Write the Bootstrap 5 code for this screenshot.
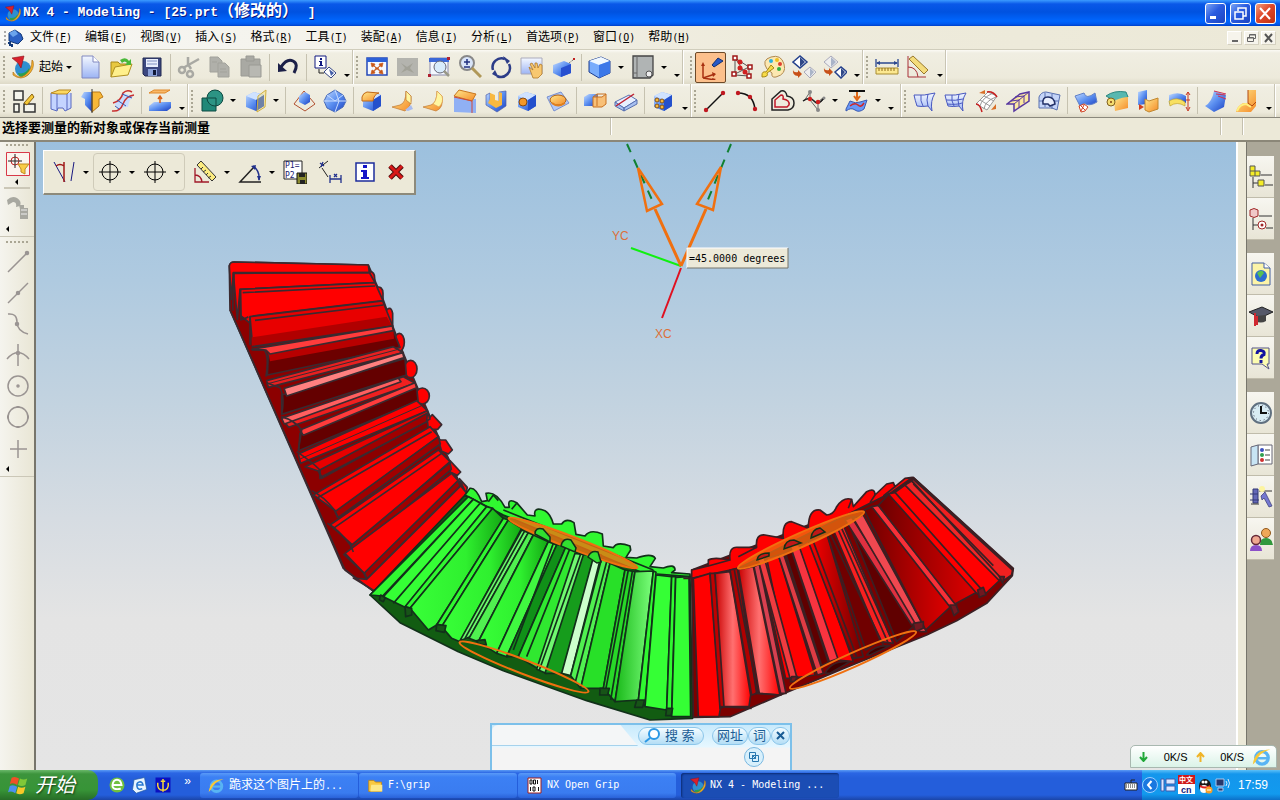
<!DOCTYPE html>
<html lang="zh-CN">
<head>
<meta charset="utf-8">
<meta name="viewport" content="width=device-width, initial-scale=1">
<title>NX 4 - Modeling</title>
<link href="https://cdn.jsdelivr.net/npm/bootstrap@5.3.0/dist/css/bootstrap.min.css" rel="stylesheet">
<style>
:root{--face:#ece9d8;--mono:"DejaVu Sans Mono","Noto Sans CJK SC",monospace}
body{font:12px/16px "Liberation Sans","Noto Sans CJK SC",sans-serif;color:#000;background:var(--face);overflow:hidden}
button{border:0;background:none;padding:0;color:inherit;font:inherit;white-space:nowrap}
svg{display:block;flex:none}
.lat{font-family:var(--mono);font-size:10px}
/* title bar */
.titlebar{height:26px;background:linear-gradient(#3c9bff 0,#0a58e8 4px,#0052e0 12px,#0066fe 21px,#0059ee 24px,#0040c8);color:#fff;font:bold 13px/26px "Liberation Mono","Noto Sans CJK SC",monospace;text-shadow:1px 1px #0a1883}
.titlebar .caption{white-space:pre;padding-left:2px}
.titlebar .han{font-size:16px;line-height:20px}
.win{width:21px;height:21px;border:1px solid #fff;border-radius:3px;background:linear-gradient(135deg,#7aa4f5,#2a5ce0 45%,#1c44c0)}
.win.shut{background:linear-gradient(135deg,#f0a080,#e0482a 45%,#c03010)}
/* menu bar */
.menubar{height:24px;background:linear-gradient(90deg,#f8f8f6,#eeebdc 60%,#ece9d8);border-bottom:1px solid #d0cdbc}
.menubar a{color:#000;text-decoration:none;white-space:nowrap}
.menus{gap:13px;margin-left:6px}
.mdi{width:15px;height:14px;background:#f6f4ec;border:1px solid #fff;border-right-color:#d5d1c0;border-bottom-color:#d5d1c0}
/* tool rows */
.tools{height:34px;background:linear-gradient(#fbfaf5 0,#f0eee2 3px,#edeadb 28px,#dedac8)}
.tools.last{border-bottom:1px solid #8b887c}
.grp{box-shadow:inset -1px 0 #c9c5b4,1px 0 #fff}
.grip{width:8px;display:flex;align-items:center;justify-content:center}
.grip::before{content:"";width:2px;height:22px;background:repeating-linear-gradient(#aaa694 0 2px,transparent 2px 4px)}
.tb{width:31px;height:33px;display:flex;align-items:center;justify-content:center;flex:none}
.tb svg,.side svg,.tab svg{width:24px;height:24px}
.tb.hot{height:31px;margin-top:2px;background:#fcc08c;border:1px solid #6c4a2a;border-radius:2px}
.bar{width:6px;display:flex;align-items:center;justify-content:center}
.bar::before{content:"";width:1px;height:27px;background:#c6c2b0}
.dd{width:12px;display:flex;align-items:center;justify-content:center;flex:none}
.dd::before,.ov::before{content:"";border:3px solid transparent;border-top-color:#000;border-bottom:0}
.ov{width:13px;display:flex;align-items:flex-end;justify-content:center;padding-bottom:7px}
.start-menu{width:66px;padding-left:2px}
.start-menu svg{margin-right:5px}
.cue{height:24px;font-weight:bold;font-size:13px;line-height:19px;padding-left:2px;border-bottom:2px solid #8b8778}
.cue .cell{flex:1 1 0}
.cue .seg{width:2px;height:17px;background:linear-gradient(90deg,#c4c0ae 50%,#fff 50%)}
/* work area */
.side{width:36px;background:linear-gradient(90deg,#f5f4ee,#e9e6d5);border-right:2px solid #77756b}
.side .tb{width:35px;height:31px}
.side .dots{height:6px;width:22px;margin-left:6px;background:repeating-linear-gradient(90deg,#aaa694 0 2px,transparent 2px 4px) 0 2px/22px 2px no-repeat}
.side .edge + .dots{height:9px;background-position:0 4px}
.side .lft{height:12px;padding:3px 0 0 6px}
.side .lft::before,.lft2::before{content:"";display:block;width:0;border:3px solid transparent;border-right-color:#000;border-left:0}
.lft2{height:8px;padding:0 0 0 15px}
.side .rule{height:2px;margin:0 4px 3px;background:#cbc7b7}
.side .edge{height:2px;border-bottom:1px solid #cbc7b7}
.canvas{background:linear-gradient(#9cc0de 0,#afcae0 22%,#c3d3e0 42%,#d6dce2 60%,#e4e4e4 76%,#e5e5e5)}
.float{left:7px;top:8px;height:45px;background:#ece9d8;border:1px solid #fff;border-right:2px solid #8d8a7b;border-bottom:2px solid #8d8a7b;padding:0 3px 0 4px}
.pair{border:1px solid #cfcbb9;border-radius:4px;height:38px}
.float .dd{width:14px}
.right-edge{width:11px;background:#ece9d8;border-left:2px solid #fff;border-right:1px solid #77756b}
.res{width:33px;background:#aca899;padding-top:14px;gap:13px}
.tab{width:27px;height:42px;display:flex;align-items:center;justify-content:center;background:linear-gradient(#f7f6f0,#e8e5d6);border-bottom:1px solid #c0bcab}
/* search box */
.finder{left:454px;bottom:0;width:302px;height:47px;border:2px solid #7cc0ea;border-bottom:0;background:linear-gradient(#c8eafc,#e6f7ff 22px,#f4f4f4 23px);color:#1a5c94}
.finder input{width:146px;height:21px;border:0;border-radius:6px 0 0 0;background:#f4f6f7;outline:0;border-bottom:1px solid #a6d2ec;clip-path:polygon(0 0,88% 0,100% 100%,0 100%)}
.pill{height:18px;border:1px solid #8cc6ea;border-radius:9px;background:linear-gradient(#f4fcff,#b4def6);font-size:13px;line-height:16px}
.go{width:69px;padding-left:4px}
.round{width:20px;height:20px;border:1px solid #7ab8e0;border-radius:50%;background:#d8f0fc;right:26px;top:22px}
.speed{right:3px;bottom:32px;width:147px;height:23px;border:1px solid #a8b8b0;border-radius:5px 5px 0 0;background:linear-gradient(#fff,#dbf3e8);font-size:11px}
/* task bar */
.taskbar{height:30px;background:linear-gradient(#5a9bf5 0,#2b66e4 3px,#245edb 8px,#245edb 25px,#1b45a8);color:#fff}
.startbtn{width:98px;height:30px;border-radius:0 10px 10px 0;background:linear-gradient(#6ab86a 0,#3c943c 4px,#379437 20px,#276c27);font-size:20px;line-height:26px;font-style:italic;text-shadow:1px 1px 2px #143c14;gap:5px;padding-left:8px}
.quick{width:102px;gap:5px;padding:0 9px 0 10px}
.task{width:158px;height:25px;border-radius:3px;background:linear-gradient(#5a9af8,#3c80f4 4px,#3a7cf0 20px,#2a62d8);gap:4px;padding-left:8px;min-width:0}
.task.on{background:#1b4db4;box-shadow:inset 1px 1px 2px #0c2c74}
.tray{height:30px;gap:2px;background:linear-gradient(#5cc0f8 0,#1496ec 4px,#129aee 24px,#0c70c8);padding-right:12px}
</style>
</head>
<body class="vh-100 d-flex flex-column">
<!-- shared paint -->
<svg width="0" height="0" class="position-absolute" aria-hidden="true">
<defs>
<linearGradient id="b" x2="1" y2="1"><stop stop-color="#c4dcff"/><stop offset=".5" stop-color="#5b8ff0"/><stop offset="1" stop-color="#1b3fc0"/></linearGradient>
<linearGradient id="o" x2="1" y2="1"><stop stop-color="#ffe98c"/><stop offset="1" stop-color="#f58a28"/></linearGradient>
<linearGradient id="lb" x2="0" y2="1"><stop stop-color="#f4f8ff"/><stop offset="1" stop-color="#9cb4f4"/></linearGradient>
<linearGradient id="pk" x2="1"><stop stop-color="#c80000"/><stop offset=".5" stop-color="#ff7070"/><stop offset="1" stop-color="#f00"/></linearGradient>
<linearGradient id="dk" x2="1"><stop stop-color="#f00"/><stop offset="1" stop-color="#700000"/></linearGradient>
<linearGradient id="kd" x2="1"><stop stop-color="#6c0000"/><stop offset="1" stop-color="#e00000"/></linearGradient>
<linearGradient id="gn" x2="1"><stop stop-color="#38ff38"/><stop offset=".6" stop-color="#2ff02f"/><stop offset="1" stop-color="#14a814"/></linearGradient>
<linearGradient id="gl" x2="1"><stop stop-color="#18b818"/><stop offset="1" stop-color="#7cff7c"/></linearGradient>
<symbol id="nx" viewBox="0 0 24 24"><circle cx="13" cy="14" r="8" fill="#2f8fd0"/><path d="M8 18q7 2 11-5l1 4q-4 7-11 4z" fill="#2aa050"/><path d="M3 17q5 8 12 3t7-15l1 1q2 8-5 14T3 20z" fill="#f4b02c" stroke="#a86a10" stroke-width=".6"/><path d="m2 3 12-2-3 12-3-5z" fill="#d8202c" stroke="#8c1018" stroke-width=".6"/></symbol>
<symbol id="cube" viewBox="0 0 24 24"><path d="M3 7 11 3l10 3v11l-8 5-10-4z" fill="url(#b)"/><path d="m3 7 8-4 10 3-8 5z" fill="#cfe2ff"/><path d="M13 11v11l8-5V6z" fill="#2450cc"/></symbol>
<symbol id="tgt" viewBox="0 0 24 24"><g fill="none" stroke="#000"><circle cx="12" cy="12" r="8"/><path d="M12 1v22M1 12h22"/></g></symbol>
<symbol id="ie" viewBox="0 0 24 24"><circle cx="12" cy="13" r="7.500" fill="none" stroke="#58b4f4" stroke-width="4"/><path d="M6 12h14v3H6z" fill="#58b4f4"/><path d="M1 21Q3 3 22 3 9 6 4 18z" fill="#f8c838"/></symbol>
</defs>
</svg>

<header class="titlebar d-flex align-items-center px-1">
<svg width="17" height="17"><use href="#nx"/></svg>
<span class="caption">NX 4 - Modeling - [25.prt<span class="han">（修改的） </span>]</span>
<div class="ms-auto d-flex gap-1">
<button class="win" aria-label="Minimize"><svg width="19" height="19"><path d="M4 12h6v3H4z" fill="#fff"/></svg></button>
<button class="win" aria-label="Restore"><svg width="19" height="19" fill="none" stroke="#fff" stroke-width="1.500"><path d="M4 8h8v7H4zM7 7V4h8v8h-3"/></svg></button>
<button class="win shut" aria-label="Close"><svg width="19" height="19" stroke="#fff" stroke-width="2"><path d="m4 4 10 11M14 4 4 15"/></svg></button>
</div>
</header>

<nav class="menubar d-flex align-items-center px-1">
<svg width="20" height="20" viewBox="0 0 20 20"><path d="M1 3v14" stroke="#aaa" stroke-width="2" stroke-dasharray="2 2"/><path d="m5 5 6-3 6 4 2 5-5 5-9-3z" fill="#2c62c4" stroke="#123878"/><path d="m5 5 6-3 3 4-5 3z" fill="#6aa4ec"/><path d="M4 15h2v2h2v2" stroke="#123878" fill="none" stroke-width="2"/></svg>
<div class="menus d-flex">
<a href="#">文件<span class="lat">(<u>F</u>)</span></a><a href="#">编辑<span class="lat">(<u>E</u>)</span></a><a href="#">视图<span class="lat">(<u>V</u>)</span></a><a href="#">插入<span class="lat">(<u>S</u>)</span></a><a href="#">格式<span class="lat">(<u>R</u>)</span></a><a href="#">工具<span class="lat">(<u>T</u>)</span></a><a href="#">装配<span class="lat">(<u>A</u>)</span></a><a href="#">信息<span class="lat">(<u>I</u>)</span></a><a href="#">分析<span class="lat">(<u>L</u>)</span></a><a href="#">首选项<span class="lat">(<u>P</u>)</span></a><a href="#">窗口<span class="lat">(<u>O</u>)</span></a><a href="#">帮助<span class="lat">(<u>H</u>)</span></a>
</div>
<div class="ms-auto d-flex" style="gap:2px">
<button class="mdi" aria-label="Minimize document"><svg width="13" height="12"><path d="M4 8h6v2H4z" fill="#666"/></svg></button>
<button class="mdi" aria-label="Restore document"><svg width="13" height="12" fill="none" stroke="#666"><path d="M2.500 5.500h6v4h-6zM4.500 5V2.500h6v4H9M2.500 6h6M5 3h6"/></svg></button>
<button class="mdi" aria-label="Close document"><svg width="13" height="12" stroke="#555" stroke-width="2"><path d="m3 2 7 8M10 2l-7 8"/></svg></button>
</div>
</nav>

<div class="tools d-flex" role="toolbar">
<div class="grp d-flex"><i class="grip"></i>
<button class="start-menu d-flex align-items-center"><svg width="24" height="24"><use href="#nx"/></svg>起始<i class="dd"></i></button>
<button class="tb" aria-label="New"><svg viewBox="0 0 24 24"><path d="M4 1h11l6 6v16H4z" fill="url(#lb)" stroke="#8088c0"/><path d="M15 1v6h6" fill="#fff" stroke="#8088c0"/></svg></button>
<button class="tb" aria-label="Open"><svg viewBox="0 0 24 24"><path d="M2 22V7h7l2 2h9v4" fill="#e8c840" stroke="#a88818"/><path d="m2 22 4-10 17-3-4 11z" fill="#fff08c" stroke="#b09020"/><path d="M11 5q6-4 9 1l2-2v6h-6l2-2q-2-3-5 0z" fill="#48b838"/></svg></button>
<button class="tb" aria-label="Save"><svg viewBox="0 0 24 24"><path d="M3 3h18v18H5l-2-2z" fill="#3c4880" stroke="#202850"/><path d="M6 4h12v8H6z" fill="#e8eefc"/><path d="M7 6h10M7 9h10" stroke="#8090c0"/><path d="M8 14h9v7H8z" fill="#8aa0d8"/><path d="M13 15h3v5h-3z" fill="#101838"/></svg></button>
<i class="bar"></i>
<button class="tb" aria-label="Cut"><svg viewBox="0 0 24 24" fill="none" stroke="#a9a9a3" stroke-width="2.500"><path d="M11 2v7l3 5M22 4 6 13"/><circle cx="5" cy="15" r="3"/><circle cx="13" cy="19" r="3"/></svg></button>
<button class="tb" aria-label="Copy"><svg viewBox="0 0 24 24" fill="#b0b0aa" stroke="#a2a29b"><path d="M2 2h8l4 4v11H2z"/><path d="M10 8h7l4 4v10H10z"/><path d="M12 14h6M12 17h7M4 7h5"/></svg></button>
<button class="tb" aria-label="Paste"><svg viewBox="0 0 24 24" fill="#a9a9a3" stroke="#9a9a94"><path d="M2 4h19v17H2z"/><path d="M7 1h8v5H7z"/><path d="M10 10h12v12H10z" fill="#b8b8b2"/></svg></button>
<i class="bar"></i>
<button class="tb" aria-label="Undo"><svg viewBox="0 0 24 24"><path d="M5 12Q11 3 17 6t1 12" fill="none" stroke="#1c2048" stroke-width="3"/><path d="M2 8v9l9-1z" fill="#1c2048"/></svg></button>
<i class="bar"></i>
<button class="tb" aria-label="Information"><svg viewBox="0 0 24 24"><path d="M2 1h11v12H2z" fill="#fff" stroke="#101880"/><path d="M7 3h2v2H7zM6 6h3v4h1v1H6v-1h1V7H6z" fill="#101880"/><path d="M6 14v4h5" fill="none" stroke="#222"/><path d="m11 17 5-5 7 6-5 5z" fill="#fff" stroke="#344484"/><path d="m16 14 5 4-3 3z" fill="#4660a8"/></svg></button>
<i class="ov"></i></div>

<div class="grp d-flex me-1"><i class="grip"></i>
<button class="tb" aria-label="Fit"><svg viewBox="0 0 24 24"><path d="M2 3h20v17H2z" fill="#f4f8ff" stroke="#2448b8" stroke-width="1.500"/><path d="M2 3h20v4H2z" fill="#2c60d8"/><path d="m6 8 4 1-1 2 3 2 3-2-1-2 4-1-1 4-2-1-2 2 2 3 2-1 1 4-4-1 1-2-3-2-3 2 1 2-4 1 1-4 2 1 2-3-2-2-2 1z" fill="#c85818" stroke="#c85818" stroke-width=".7"/></svg></button>
<button class="tb" aria-label="Fit selection"><svg viewBox="0 0 24 24"><path d="M1 3h21v18H1z" fill="#b4b4ae"/><path d="m5 8 6 4 6-4-3 5 4 5-7-3-6 3 4-5z" fill="#a2a298"/></svg></button>
<button class="tb" aria-label="Zoom window"><svg viewBox="0 0 24 24"><path d="M3 3h18v17H3z" fill="#f4f8ff" stroke="#88a"/><path d="M2 3h20v4H2z" fill="#3c68d8"/><circle cx="13" cy="12" r="6" fill="#d8ecfc" stroke="#667"/><path d="m17 16 5 5" stroke="#998" stroke-width="2.500"/><path d="M1 19h3v3H1zM20 2h3v3h-3z" fill="#b02030"/></svg></button>
<button class="tb" aria-label="Zoom"><svg viewBox="0 0 24 24"><circle cx="9" cy="8" r="7" fill="#d8e4f8" stroke="#888" stroke-width="2"/><path d="M6 7h6M9 4v6M6 12h6" stroke="#203080" stroke-width="1.500"/><path d="m14 13 9 9" stroke="#b09858" stroke-width="3"/></svg></button>
<button class="tb" aria-label="Rotate"><svg viewBox="0 0 24 24" fill="none" stroke="#2c3c88" stroke-width="2.500"><path d="M4 15A9 9 0 0 1 16 4M20 9A9 9 0 0 1 8 21"/><path d="m14 1 7 5-3 3zM10 23l-7-4 3-4z" fill="#2c3c88" stroke="none"/></svg></button>
<button class="tb" aria-label="Pan"><svg viewBox="0 0 24 24"><path d="M1 3h21v16H1z" fill="url(#lb)" stroke="#aab"/><path d="m9 12 4 3-3-6 2-1 3 5 0-5 2 0 1 5 2-4 2 1v9l-4 4h-5z" fill="#f8c870" stroke="#b07828" stroke-width=".8"/></svg></button>
<button class="tb" aria-label="Perspective"><svg viewBox="0 0 24 24"><path d="M2 10 13 6l7 3v9l-10 4-8-4z" fill="url(#b)"/><path d="m10 13 10-4v9l-10 4z" fill="#2850d0"/><path d="M22 4h2" stroke="#c02020" stroke-width="2"/><path d="m18 8 4-3" stroke="#555" stroke-dasharray="1 1"/></svg></button>
<i class="bar"></i>
<button class="tb" aria-label="Shaded"><svg viewBox="0 0 24 24"><path d="m1 6 12-4 9 4v12l-11 5-10-6z" fill="#78acfc" stroke="#1c3c90"/><path d="m1 6 12-4 9 4-11 4z" fill="#f0f8ff"/><path d="M11 10v13l11-5V6z" fill="#3c78e8"/></svg></button><i class="dd"></i>
<button class="tb" aria-label="Layer"><svg viewBox="0 0 24 24"><path d="M2 1h20v19l-3 3H2z" fill="#b0b4b4" stroke="#444" stroke-width="1.300"/><path d="M6 1v17H2M6 18v5" stroke="#666" fill="none"/><circle cx="18" cy="19" r="3" fill="#eee" stroke="#555"/></svg></button><i class="dd"></i>
<i class="ov"></i></div>

<div class="grp d-flex"><i class="grip"></i>
<button class="tb hot" aria-label="WCS"><svg viewBox="0 0 24 24"><path d="M4 22V8m0 14 12-4M4 22l12 2" stroke="#a83010" stroke-width="1.500"/><path d="M2 10l2-4 2 4zM13 16l4 2-3 3zM13 22l4 1-3 2z" fill="#a83010"/><path d="m13 9 6-7 5 3-9 6z" fill="#2858c8" stroke="#14306c"/></svg></button>
<button class="tb" aria-label="Reorient"><svg viewBox="0 0 24 24"><path d="M5 3v17l14 1V12L5 3l8 12M5 19l14-7" fill="none" stroke="#555"/><path d="M3 1h4v4H3zM2 17h4v4H2zM17 19h4v4h-4zM18 10h4v4h-4z" fill="#fff" stroke="#a01818" stroke-width="1.500"/><circle cx="10" cy="7" r="2.500" fill="#d02020"/><circle cx="10" cy="13" r="2.500" fill="#d02020"/><circle cx="15" cy="17" r="2.500" fill="#d02020"/></svg></button>
<button class="tb" aria-label="Display"><svg viewBox="0 0 24 24"><path d="M6 14Q0 5 10 2t13 7-8 13q-5 1-4-4z" fill="#fce8b0" stroke="#b08850"/><circle cx="10" cy="6" r="2" fill="#2cb0e0"/><circle cx="16" cy="5" r="2" fill="#f0c020"/><circle cx="19" cy="9" r="2" fill="#e04030"/><circle cx="18" cy="14" r="2" fill="#30b040"/><path d="M1 20q0-4 4-3l5-7 3 3-7 5q2 4-5 4z" fill="#f8dc48" stroke="#a88818"/></svg></button>
<button class="tb" aria-label="Show"><svg viewBox="0 0 24 24"><path d="m1 7 7-6 7 6-7 6z" fill="#fff" stroke="#24408c" stroke-width="1.500"/><path d="m8 2 5 5-5 5z" fill="#304888"/><path d="m12 17 6-5 6 5-6 6z" fill="#eee" stroke="#aab"/><path d="m18 13 4 4-4 5z" fill="#aab4c8"/><path d="M1 14q0 4 5 3v-2l4 4-4 4v-2q-6 0-5-7z" fill="#c85018"/></svg></button>
<button class="tb" aria-label="Hide"><svg viewBox="0 0 24 24"><path d="m1 7 7-6 7 6-7 6z" fill="#eee" stroke="#aab"/><path d="m8 2 5 5-5 5z" fill="#aab4c8"/><path d="m12 17 6-5 6 5-6 6z" fill="#fff" stroke="#24408c" stroke-width="1.500"/><path d="m18 13 4 4-4 5z" fill="#304888"/><path d="M1 12q0 4 5 3v-2l4 4-4 4v-2q-6 0-5-7z" fill="#c85018"/></svg></button>
<i class="ov"></i></div>

<div class="grp d-flex"><i class="grip"></i>
<button class="tb" aria-label="Distance"><svg viewBox="0 0 24 24"><path d="M1 4v8M23 4v8M2 8h20" stroke="#2c4890" stroke-width="1.300"/><path d="m1 8 4-2v4zM23 8l-4-2v4z" fill="#2c4890"/><path d="M1 13h22v6H1z" fill="#fce890" stroke="#a88c30"/><path d="M4 13v3M7 13v3M10 13v3M13 13v3M16 13v3M19 13v3" stroke="#906c18"/></svg></button>
<button class="tb" aria-label="Angle"><svg viewBox="0 0 24 24"><path d="M2 1v21h18M2 12q9 0 10 10" fill="none" stroke="#a83038"/><path d="m3 4 4-3 15 14-4 4z" fill="#f4dc7c" stroke="#98782c"/></svg></button>
<i class="ov"></i></div>
</div>

<div class="tools last d-flex" role="toolbar">
<div class="grp d-flex"><i class="grip"></i>
<button class="tb" aria-label="Sketch"><svg viewBox="0 0 24 24"><path d="M2 2h9v9H2zM2 15h5v8H2zM12 15h11v8H12z" fill="#f4f4ec" stroke="#333" stroke-width="1.500"/><path d="m12 14 8-9 2 3-7 8z" fill="#f4c838" stroke="#8c6410"/></svg></button><i class="bar"></i>
<button class="tb" aria-label="Extrude"><svg viewBox="0 0 24 24"><path d="M2 4v16l6 2 1-3h5l2 3 6-3V4" fill="#c4d4ff" stroke="#5868c0"/><path d="m2 4 8-3h12l-4 4H8z" fill="#fcd860" stroke="#b88820"/><path d="M8 5v16M18 5v16" stroke="#5868c0"/></svg></button>
<button class="tb" aria-label="Revolve"><svg viewBox="0 0 24 24"><path d="M12 3H4L1 8l4 2v6l7 7z" fill="url(#b)"/><path d="M12 3h8l3 5-4 2v7l-7 6z" fill="#f8b838" stroke="#b87818"/><path d="M12 0v24" stroke="#333"/></svg></button>
<button class="tb" aria-label="Sweep"><svg viewBox="0 0 24 24"><path d="M3 13q8-1 9-9l10 3q-4 4-5 11-6-1-9 5z" fill="#c8dcff"/><path d="M1 22q8 1 11-7t11-9M2 14Q10 12 12 4q4-4 9-1" fill="none" stroke="#c83030" stroke-width="1.500"/><path d="m6 11 9 6M11 5l10 4M4 17l4 3" stroke="#3858b0" fill="none"/></svg></button><i class="bar"></i>
<button class="tb" aria-label="Thicken"><svg viewBox="0 0 24 24"><path d="m1 4 5-3h16l-5 3z" fill="#f8b868" stroke="#e08828"/><path d="m1 17 5-4h17v6l-4 3H1z" fill="url(#b)"/><path d="M12 14V7m-2 3 2-3 2 3" stroke="#d86018" stroke-width="1.500" fill="none"/></svg></button><i class="ov"></i></div>
<div class="grp d-flex"><i class="grip"></i>
<button class="tb" aria-label="Unite"><svg viewBox="0 0 24 24"><path d="M2 9h14v13H2z" fill="#208878" stroke="#0c4840"/><circle cx="15" cy="9" r="8" fill="#2c9484" stroke="#0c4840"/><path d="M8 9h8v8" stroke="#0c4840" fill="none"/></svg></button><i class="dd"></i>
<button class="tb" aria-label="Trim"><svg viewBox="0 0 24 24"><use href="#cube"/><path d="m14 23 8-5L23 1l-8 6z" fill="#fce060" fill-opacity=".35" stroke="#d0b040"/></svg></button><i class="dd"></i><i class="bar"></i>
<button class="tb" aria-label="Draft"><svg viewBox="0 0 24 24"><path d="M12 2 2 15l11 7 10-7z" fill="none" stroke="#b05030"/><path d="m7 7 6-4 5 3v7l-5 3-6-3z" fill="url(#b)"/></svg></button>
<button class="tb" aria-label="Body"><svg viewBox="0 0 24 24"><path d="m12 1 8 5 3 6-3 6-8 5-8-4-3-7 3-6z" fill="url(#b)" stroke="#4468b8"/><path d="M1 12h15l7 0M12 1l4 11-4 11M4 6l8 6 8-6" stroke="#c8dcff" fill="none"/></svg></button><i class="bar"></i>
<button class="tb" aria-label="Edge blend"><svg viewBox="0 0 24 24"><use href="#cube"/><path d="M2 12V8q1-4 5-5l12 1q-5 1-6 8z" fill="url(#o)" stroke="#c06818"/></svg></button>
<button class="tb" aria-label="Face blend"><svg viewBox="0 0 24 24"><path d="m1 18 8-2q6-2 6-14l5 5q1 10-6 15z" fill="url(#o)" stroke="#c07830" stroke-width=".7"/><path d="M15 2v9l5 4V7z" fill="#fff6a0" stroke="#c07830" stroke-width=".7"/><path d="m14 21 6-5 2 4-5 2z" fill="#a8bcf0"/></svg></button>
<button class="tb" aria-label="Soft blend"><svg viewBox="0 0 24 24"><path d="m1 18 8-2q6-2 6-14l5 5q2 12-6 15z" fill="url(#o)" stroke="#c07830" stroke-width=".7"/><path d="M15 2q0 9-4 13l6 3q5-5 3-11z" fill="#fff6a0" stroke="#e0a050" stroke-width=".7"/></svg></button>
<button class="tb" aria-label="Chamfer"><svg viewBox="0 0 24 24"><path d="M1 8v15l22 1V10z" fill="#90b0f4"/><path d="m1 7 5-6 17 4-4 7z" fill="url(#o)" stroke="#c87820"/><path d="m1 8 18 4v12" fill="none" stroke="#d04838"/></svg></button>
<button class="tb" aria-label="Shell"><svg viewBox="0 0 24 24"><path d="M2 6 6 4v10l6 3 3-2V3l7-1v15l-9 6-11-7z" fill="url(#b)" stroke="#5060a8" stroke-width=".7"/><path d="M6 10V4l5 2v5l4 1V3l3 1v12l-6 3-8-5z" fill="#f8b840"/></svg></button>
<button class="tb" aria-label="Hole"><svg viewBox="0 0 24 24"><use href="#cube"/><circle cx="8" cy="13" r="4" fill="#f49828" stroke="#884810"/></svg></button>
<button class="tb" aria-label="Boss"><svg viewBox="0 0 24 24"><path d="m1 8 14-5 8 11-15 8z" fill="#b0c8f8" stroke="#7890d0"/><ellipse cx="12" cy="11" rx="8" ry="5" fill="url(#o)" stroke="#b06010"/><path d="M6 14q6 5 13 0" fill="none" stroke="#e08020" stroke-width="2"/></svg></button><i class="bar"></i>
<button class="tb" aria-label="Offset face"><svg viewBox="0 0 24 24"><path d="m1 8 5-3h9v12H1z" fill="url(#b)"/><path d="M10 8h9l4-3v10l-4 3h-9z" fill="#f8c078" stroke="#c87020"/><path d="m10 8 4-3h9M14 5v12" stroke="#c87020" fill="none"/></svg></button>
<button class="tb" aria-label="Scale"><svg viewBox="0 0 24 24" stroke="#5870b0"><path d="m1 13 14-7 8 5-13 8z" fill="#e8f0ff"/><path d="m1 13 9 6v3l-9-5zM10 19l13-8v4l-13 7z" fill="#a8c0f0"/><path d="m2 17 18-12" stroke="#c02030" stroke-width="1.500"/></svg></button><i class="bar"></i>
<button class="tb" aria-label="Pattern"><svg viewBox="0 0 24 24"><use href="#cube"/><g fill="#f8b838" stroke="#80501c"><circle cx="6" cy="11" r="2"/><circle cx="11" cy="12" r="2"/><circle cx="6" cy="17" r="2"/><circle cx="11" cy="18" r="2"/></g></svg></button><i class="ov"></i></div>
<div class="grp d-flex pe-1"><i class="grip"></i>
<button class="tb" aria-label="Line"><svg viewBox="0 0 24 24"><path d="M3 21 20 4" stroke="#111" stroke-width="1.500"/><circle cx="3" cy="21" r="2.200" fill="#c01820"/><circle cx="20" cy="4" r="2.200" fill="#c01820"/></svg></button>
<button class="tb" aria-label="Arc"><svg viewBox="0 0 24 24"><path d="M4 4q15 0 17 16" fill="none" stroke="#111" stroke-width="1.500"/><circle cx="4" cy="4" r="2.200" fill="#c01820"/><circle cx="16" cy="8" r="2.200" fill="#c01820"/><circle cx="21" cy="20" r="2.200" fill="#c01820"/></svg></button><i class="bar"></i>
<button class="tb" aria-label="Offset curve"><svg viewBox="0 0 24 24" fill="none"><path d="M1 21V10l9-8q5-1 6 5 7 1 7 7t-6 7z" stroke="#222" stroke-width="1.500"/><path d="M4 18v-7l6-5q3 0 2 4 7 1 6 6l-2 2z" stroke="#c01828" stroke-width="1.500"/></svg></button>
<button class="tb" aria-label="Spline"><svg viewBox="0 0 24 24"><path d="M1 12q7-5 11 0t10-2M2 12l6-9 0 8 8 10 0-8 6-5" stroke="#666" fill="none"/><circle cx="8" cy="3" r="2" fill="#888"/><circle cx="16" cy="21" r="2" fill="#888"/><circle cx="22" cy="9" r="1.500" fill="#888"/><path d="M1 12q7-5 11 0t9-2" stroke="#222" fill="none" stroke-width="1.500"/><circle cx="8" cy="10" r="2.200" fill="#d02020"/><circle cx="16" cy="13" r="2.200" fill="#d02020"/></svg></button><i class="dd"></i>
<button class="tb" aria-label="Project curve"><svg viewBox="0 0 24 24"><path d="M4 2h16" stroke="#111" stroke-width="2"/><path d="m1 20 4-8q6 3 10 1l7-2-3 9q-5 4-9 1t-9 1z" fill="#6898f8" stroke="#3858b0"/><path d="M5 17q5-4 8-1t6-2" stroke="#d02828" fill="none" stroke-width="1.500"/><path d="M12 3v6m-3-2 3 4 3-4" stroke="#e06818" stroke-width="2" fill="none"/></svg></button><i class="dd"></i><i class="ov"></i></div>
<div class="grp d-flex"><i class="grip"></i>
<button class="tb" aria-label="Ruled"><svg viewBox="0 0 24 24" stroke="#4858c0"><path d="M1 6q10 1 21-2-5 8-3 18l-4-5q-6 1-11 0-2-6-3-11z" fill="url(#lb)"/><path d="M8 6q-1 6 2 11M15 5q-2 6 0 12" fill="none"/></svg></button>
<button class="tb" aria-label="Mesh"><svg viewBox="0 0 24 24" stroke="#4858c0"><path d="M1 6q10 1 21-2-5 8-3 18l-4-5q-6 1-11 0-2-6-3-11z" fill="url(#lb)"/><path d="M8 6q-1 6 2 11M15 5q-2 6 0 12M2 11q10 1 17-1M3 15q10 1 15-1" fill="none"/></svg></button>
<button class="tb" aria-label="Swept"><svg viewBox="0 0 24 24"><path d="m1 15 12-12 9 4-10 14z" fill="#fff" stroke="#999"/><path d="m5 11 10 6M9 7l10 5M5 17q2-8 13-13M9 20q1-8 12-12" stroke="#999" fill="none"/><path d="M1 15q4 0 6 8M12 3q6-1 10 5" stroke="#c82020" fill="none" stroke-width="1.500"/><path d="m4 4 6-3v4zM16 21l5-6v5z" fill="#d87028"/></svg></button>
<button class="tb" aria-label="Section"><svg viewBox="0 0 24 24"><path d="m1 15 13-10 9-2v9l-15 10v-7z" fill="#fce8a0" stroke="#5838a0" stroke-width="1.500"/><path d="m8 15 15-12M5 12l8-1v7M9 8l9-1v7" stroke="#5838a0" fill="none"/></svg></button>
<button class="tb" aria-label="N-sided"><svg viewBox="0 0 24 24" stroke="#5870b0"><path d="M2 8q2-5 7-5l14 3-3 15-5-2H2z" fill="#c4d4f8"/><path d="M2 12h20M8 4v14M15 5v15" fill="none"/><path d="M6 15q-1-7 5-7t7 7l-5 2-2-2z" fill="#e8eefc" stroke="#223068" stroke-width="1.500"/></svg></button><i class="bar"></i>
<button class="tb" aria-label="Bridge"><svg viewBox="0 0 24 24"><path d="m1 7 9-3q2 7 11 0l2 9q-8 5-13 1l-4 3z" fill="url(#b)" stroke="#6080c8"/><path d="m5 17 5-2 4 3-3 4-4 1z" fill="#fff" stroke="#d04020"/><path d="m7 17 4 4m-1-5-3 6" stroke="#d04020"/></svg></button>
<button class="tb" aria-label="Extension"><svg viewBox="0 0 24 24"><path d="M1 7q8-6 20-4l2 5-13 4z" fill="#58b8b0" stroke="#2c8880"/><path d="M9 12q8-4 14-4v11l-13 3z" fill="url(#o)"/><circle cx="6" cy="13" r="4" fill="#f4dc70" stroke="#806020"/><circle cx="6" cy="13" r="1" fill="#804010"/></svg></button>
<button class="tb" aria-label="Offset surface"><svg viewBox="0 0 24 24"><path d="m2 3 9-2v14l-9 1z" fill="url(#b)"/><path d="m9 10 4 2 9-3v11l-9 3-4-2z" fill="url(#o)" stroke="#c08830"/><path d="m3 15 5 3-5 3z" fill="#d04020"/></svg></button>
<button class="tb" aria-label="Thick sheet"><svg viewBox="0 0 24 24"><path d="M2 6q10-4 17 1v7q-8-4-17 1z" fill="url(#b)"/><path d="M2 12q8-5 16 1v4q-8-5-15 0z" fill="#f8e060" stroke="#b89828" stroke-width=".6"/><path d="M21 3v17m-2-9h4m-4-5 2-3 2 3m-4 12 2 4 2-4" stroke="#c83820" fill="none"/></svg></button><i class="bar"></i>
<button class="tb" aria-label="Sew"><svg viewBox="0 0 24 24"><path d="m10 2 12 4-2 12-10 5-9-6q7-4 9-15z" fill="url(#b)"/><path d="m10 2 12 3M12 5l9 1M14 7l8 3" stroke="#d03050"/></svg></button>
<button class="tb" aria-label="Patch"><svg viewBox="0 0 24 24"><path d="M13 1h8v16l-5 6H1q1-6 7-9h5z" fill="url(#o)"/><path d="M13 1v13l4 3 4-4" stroke="#b04810" fill="none"/><path d="M2 22q3-7 9-7l5 3" stroke="#fff080" fill="none" stroke-width="2"/></svg></button><i class="ov"></i></div>
</div>

<div class="cue d-flex"><span class="cell">选择要测量的新对象或保存当前测量</span><i class="seg"></i><span class="cell"></span><i class="seg"></i><span class="ps-3"></span><i class="seg ms-1"></i><span class="px-3 me-1"></span></div>

<main class="d-flex flex-fill" style="min-height:0">
<aside class="side flex-shrink-0">
<div class="dots"></div>
<button class="tb" aria-label="Filter"><svg viewBox="0 0 24 24"><path d="M.5.500h23v23H.5z" fill="#faf4ee" stroke="#d83848"/><g fill="none"><circle cx="9" cy="9" r="4" stroke="#c02828"/><path d="M9 2v14M2 9h14" stroke="#222"/></g><path d="M12 12h11l-4 5v5l-4-2v-3z" fill="#f8cc48" stroke="#c08c20"/></svg></button>
<div class="lft2"></div><div class="rule"></div>
<button class="tb" aria-label="Snap"><svg viewBox="0 0 24 24" fill="#a8a8a0"><path d="M1 4q5-5 10-2t3 8l-4 1q1-5-3-5l-5 3z"/><path d="M13 9h5v3h4v11h-8V13z"/><path d="M15 14h6m-6 4h6" stroke="#eee"/></svg></button>
<div class="lft"></div><div class="edge"></div><div class="dots"></div>
<button class="tb" aria-label="End point"><svg viewBox="0 0 24 24" stroke="#9a9492" stroke-width="1.500"><path d="M2 22 21 3"/><circle cx="21" cy="3" r="1.500" fill="#999"/></svg></button>
<button class="tb" aria-label="Mid point"><svg viewBox="0 0 24 24" stroke="#9a9492" stroke-width="1.500"><path d="M2 22 22 2"/><circle cx="12" cy="12" r="1.500" fill="#999"/></svg></button>
<button class="tb" aria-label="Control point"><svg viewBox="0 0 24 24" stroke="#9a9492" stroke-width="1.500" fill="none"><path d="M2 2q9-1 9 8t11 12"/><circle cx="11" cy="12" r="1.500" fill="#999"/></svg></button>
<button class="tb" aria-label="Intersection"><svg viewBox="0 0 24 24" stroke="#9a9492" stroke-width="1.500" fill="none"><path d="M12 1v22M1 16q11-13 22 0"/><circle cx="12" cy="10" r="1.500"/></svg></button>
<button class="tb" aria-label="Arc center"><svg viewBox="0 0 24 24" stroke="#9a9492" stroke-width="1.500" fill="none"><circle cx="12" cy="12" r="10"/><circle cx="12" cy="12" r="1"/></svg></button>
<button class="tb" aria-label="Quadrant"><svg viewBox="0 0 24 24" stroke="#9a9492" stroke-width="1.500" fill="none"><circle cx="12" cy="12" r="10"/><path d="M12 1v2M12 21v2M1 12h2M21 12h2" stroke-width="3"/></svg></button>
<button class="tb" aria-label="Existing point"><svg viewBox="0 0 24 24" stroke="#9a9492" stroke-width="1.500"><path d="M12 4v18M4 13h17"/></svg></button>
<div class="lft"></div><div class="edge"></div>
</aside>

<section class="canvas flex-fill position-relative d-flex" style="min-width:0">
<svg class="w-100 h-100" viewBox="36 142 1200 628" role="img" aria-label="Gear model">
<!-- left sector -->
<g transform="translate(220 250) scale(.333333)" stroke="#3a2a30" stroke-width="5" stroke-linejoin="round" fill="#f00">
<path d="M28 48Q30 36 42 36L445 45 455 68 467 97 490 150 518 228 550 310 587 400 622 480 655 560 690 635 715 690 742 730 465 1027 375 960 30 180z" fill="#8c0000"/>
<path d="M450 65q14 0 14 20v12M468 112q20-5 21 18v20l-12-8M492 190q20-30 26 0v38l-20-6z"/><ellipse cx="538" cy="277" rx="15" ry="27"/><ellipse cx="572" cy="357" rx="19" ry="26"/><ellipse cx="607" cy="438" rx="21" ry="24"/><path d="m622 510 15-16 28 30-12 14-28 0zM655 570l22 0 20 30-12 12-20-8zM690 632l32 34-10 10-22-10zM718 686l24 26-4 18z"/>
<path d="M28 48q2-12 14-12l403 9 3 23-408 0-6 80z"/>
<path d="m40 70 408-2 17 30-405 20-8 90z"/>
<path d="m60 118 405-20 24 54-389 46-12 20-25-20z"/>
<path d="m68 128 397-20M42 72l-4 110M62 118v90" fill="none"/>
<path d="m90 200 398-47 30 75-420 62z" fill="#e80000"/><path d="m95 262 405-62 16 28-420 62z" fill="#b00000" stroke="none"/><path d="m105 211 385-46M95 290l420-62M90 200v85" fill="none"/>
<path d="m145 310 375-68 20 50-398 83z" fill="#6c0000"/><path d="m145 308 375-68 2 26-372 68z" fill="#b80000" stroke="none"/>
<path d="m95 298 422-70 3 14-370 70-12-12z" fill="#ff3c3c"/>
<path d="m140 392 380-102 30 18-405 104z" fill="#e82020"/><path d="m140 402 395-104" stroke-width="3"/>
<path d="m185 435 370-110 4 50-374 118z" fill="#640000"/>
<path d="m192 415 356-107 4 15-352 115z" fill="#ff8080"/>
<path d="m185 505 365-125 36 20-380 132z" fill="#f02020"/><path d="m185 505 350-120 8 10-350 127z" fill="#ff6060"/>
<path d="m240 550 350-138 4 40-358 150z" fill="#640000"/>
<path d="m240 540 345-142 5 15-340 143z" fill="#ff3c3c"/>
<path d="m235 612 355-160 32 30-380 158z" fill="#f00"/><path d="m238 628 365-160" stroke-width="3"/>
<path d="m255 650 367-168 8 25-325 178-10-22z" fill="#e80000"/><path d="m295 662 327-172-2 25-315 165z" fill="#a00000"/>
<path d="m280 735 350-205 26 30-306 225z" fill="#f00"/><path d="m290 745 345-200"/>
<path d="m345 785 310-225 6 22-306 220z" fill="#a00000"/>
<path d="m330 825 325-225 35 35-290 252z" fill="#f00"/><path d="m340 835 325-225"/>
<path d="m392 888 298-250 4 20-294 248z" fill="#a00000"/>
<path d="m375 910 320-240 20 22-280 280z" fill="#f00"/>
<path d="m432 970 282-278 6 16-280 280z" fill="#a00000"/>
<path d="m440 988 282-280 20 24-277 292-65-40z" fill="#f00"/>
<path d="m370 912 65 60 5 14M322 820q30 15 70 66l8 20M275 722q35 15 70 60l8 22M230 605q45 30 70 55l0 28M183 500q40 10 62 40l-10 60M140 398l40 15q15 30 5 80M95 300l38 0q15 20 5 80M30 180l340 775 95 72M60 210q20-5 25-10" fill="none"/>
</g>
<!-- middle sector -->
<g transform="translate(370 470) scale(.333333)" stroke="#12301a" stroke-width="5" stroke-linejoin="round" fill="#30f830">
<path d="M285 75 400 135 850 300 960 318 968 745 840 750 650 692 400 602 265 545 90 458 0 375z" fill="#125c12"/>
<path d="M285 75 300 55Q318 52 335 95L352 92 348 70Q378 62 405 112L418 112Q410 82 440 98L472 135 495 138Q488 108 525 122 542 132 550 162L575 162Q588 143 612 158L618 193 645 198Q660 176 697 192L700 228 730 233Q740 213 780 228L782 240 768 262 800 264Q845 248 856 265L840 290 880 294Q915 280 915 300L905 308 960 312V322H850L400 135z"/>
<path d="M355 95 370 75 385 92M425 118 440 100M860 312 960 320" fill="none"/>
<path d="m295 80 15 8L38 378l-38-3z"/>
<path d="m310 88 40 22-245 302-65-32z" fill="#35ff35"/><path d="m350 110 18 5-248 300-15-5z"/>
<path d="m368 115 32 30-200 320-25 15-55-65z" fill="url(#gn)"/><path d="m400 145 15 5-200 320-15-5z"/>
<path d="m415 150 40 25-185 340-25-10-30-35z" fill="url(#gn)"/>
<path d="m455 180 20 8-175 312-30 12z" fill="#6cf86c"/><path d="m475 188 15 7-165 320-28-10z" fill="#50f050"/>
<path d="m490 195 45 20-155 335-55-35z" fill="url(#gn)"/><path d="m535 215 25 10-150 335-30-10z" fill="#40f840"/>
<path d="m560 225 30 0-145 335-35 0z" fill="#109018"/>
<path d="m590 225 30 22-115 350-60-37z" fill="#30e830"/><path d="m615 250 28 4-115 356-28-12z" fill="#70f870"/>
<path d="m640 255 35-5-98 360-52 0z" fill="#169c1c"/>
<path d="m672 255 22 0-92 362-27-7z" fill="#ccffcc"/><path d="m695 265 25 15-88 375-30-38z" fill="#50f050"/>
<path d="m720 280 45 20-65 355-68 0z" fill="#28e028"/><path d="m765 300 30 5-60 390-35-40z" fill="#28d828"/>
<path d="m795 305 55-2-45 387-70 5z" fill="url(#gl)"/><path d="m850 303 8 4-33 400-20-15z"/>
<path d="m858 315 47 5-15 400-65-10z" fill="#35ff35"/><path d="m905 320 12 0-12 410-15-10z"/><path d="m917 322 40-2 5 420-57 0z" fill="#35ff35"/>
<path d="M550 220 430 540M775 300 705 670M787 305 722 690M632 252 508 600M710 275 615 640M330 100 70 400M400 120l450 180M600 235 470 560M463 185 285 505" fill="none"/>
<path d="m32 375 14 8-6 12-12-6zM105 410l20 5 0 20-18 5zM200 463l28 4-5 20-25-5zM320 512l25-3 4 16-24-3zM690 655h28l-5 20h-24zM800 690h24l-6 22h-24zM890 715h18l-5 22h-16z" fill="#175417"/>
</g>
<!-- right sector -->
<g transform="translate(680 460) scale(.333333)" stroke="#3a2024" stroke-width="5" stroke-linejoin="round" fill="#f00">
<path d="M35 330 630 100 700 52 1000 325 997 347 920 430 830 482 740 525 500 622 300 706 150 770 40 772z" fill="#7c0000"/>
<path d="M35 330 85 318 85 300Q100 290 150 300 145 258 175 262L230 262Q225 222 255 225L310 235Q305 185 335 185L385 205Q385 145 420 150L440 165Q460 165 470 140 490 110 515 118L520 140 560 95Q585 82 585 105L620 72 640 68 645 80 675 55 697 52 630 100 570 130 175 325 35 355z"/>
<path d="M85 318 150 300M175 290 230 262M515 118 505 145M585 105 570 128M645 80 610 108M10 355H90" fill="none"/>
<path d="m40 355 50-15 32 400-5 30H55z"/><path d="m90 340 15 0 30 400-15 5z" fill="#c00000"/>
<path d="m105 340 45-5 62 370-5 35-75 0z" fill="url(#pk)"/><path d="m150 330 22-5 58 375-15 5z" fill="#b00000"/>
<path d="m175 328 45-8 80 385-62-5z" fill="url(#pk)"/><path d="m222 320 16-8 80 388-16 0z" fill="#d84050"/>
<path d="m240 310 20-15 85 360-28 0z"/><path d="m260 295 35-10 110 360-70 10z"/>
<path d="m232 290 20 0 98 360-20 5z" fill="#f03c40"/>
<path d="m295 285 15-5 120 360-18 5z" fill="#e03c44"/><path d="m315 275 18-8 112 340-20 10z" fill="#600000"/>
<path d="m330 255 28 0 118 340-28 10z" fill="#f83440"/><path d="m358 260 32-20 130 365-45-5z"/>
<path d="m385 245 55-25 110 370-30 5z" fill="url(#dk)"/><path d="m400 245 130 345" fill="none"/>
<path d="m440 220 22-8 140 328-45 30z" fill="#700000"/><path d="m462 215 30-15 148 350-38-5z" fill="#f82020"/>
<path d="m500 175 24-5 186 320-60 55z" fill="#600000"/><path d="m450 220 160 335M475 210l150 340M485 205l155 345" fill="none"/>
<path d="m495 180 20-8 200 315-20 8z" fill="#e03040"/>
<path d="m520 175 30-10 190 350-20 0z" fill="#f04850"/><path d="m552 150 25-10 235 300-75 70z" fill="url(#kd)"/>
<path d="m575 140 20-4 235 300-20 5z" fill="#f83038"/><path d="m595 136 32-34 263 295-65 35z" fill="url(#kd)"/>
<path d="m625 102 22-5 265 290-20 15z"/><path d="m645 97 30-22 285 285-48 45-10-20z"/><path d="m675 75 20-12 275 282-12 17z" fill="#f02828"/>
<path d="M695 62 702 56 998 328 995 345 970 362z" fill="#f02020"/><path d="m700 72 240 245M163 330l70 370" fill="none"/>
<path d="m698 54 300 274" stroke-width="9" fill="none"/>
<path d="m120 740 95 5M225 700l80 5M700 490l30-5 0 20-25 10zM810 435l18 0 8 20-14 12zM893 390l17-8 8 22-20 8zM958 350l15 0-5 20zM335 650h18l-10 15h-12z" fill="#701820"/>
<path d="M435 640q20-40 75-35l-60 35zM560 585q20-30 70-28l-60 28z" fill="#400000"/>
</g>
<!-- selected circles -->
<g fill="none" stroke="#f07010" stroke-width="2">
<ellipse cx="573" cy="543" rx="69" ry="6" transform="rotate(21 573 543)" fill="#f07010" fill-opacity=".8"/>
<ellipse cx="524" cy="667" rx="69" ry="7" transform="rotate(21 524 667)"/>
<ellipse cx="801" cy="540" rx="69" ry="7" transform="rotate(-24 801 540)" fill="#f07010" fill-opacity=".75"/>
<ellipse cx="853" cy="660" rx="69" ry="7" transform="rotate(-24 853 660)"/>
</g>
<g stroke="#123018" stroke-width="1.500" fill="#30e030"><path d="M535 534q0-7 8-5l7 8v5zM561 546q2-9 10-6l5 8-1 4zM588 557q3-7 10-5l3 10-4 1z"/><path d="M757 560q1-7 12-7l0 3zM784 549q1-9 10-9l7 3zM811 538q1-9 9-10l5 4z" fill="#c01818"/></g>
<!-- measured angle -->
<g fill="none">
<path d="m627 144 26 58M731 144l-24 58" stroke="#108030" stroke-width="2" stroke-dasharray="9 8"/>
<path d="m631 248 50 18" stroke="#10f010" stroke-width="2"/><path d="m681 268-19 50" stroke="#e01020" stroke-width="2"/>
<path d="m681 266-26-57M681 266l25-57" stroke="#f07010" stroke-width="3"/>
<path d="m638 168 9 43 15-7zM721 167l-8 43-16-6z" stroke="#f07010" stroke-width="2.500"/>
</g>
<g fill="#dd7038" font-family="Liberation Sans,sans-serif" font-size="12"><text x="612" y="240">YC</text><text x="655" y="338">XC</text></g>
<path d="M687 248h101v20H687z" fill="#ece9d8"/><path d="M687 268v-20h101" stroke="#fff" fill="none"/><path d="M687 268h101v-20" stroke="#77756b" fill="none"/>
<text x="689" y="262" font-family="DejaVu Sans Mono,monospace" font-size="10">=45.0000 degrees</text>
</svg>

<div class="float position-absolute d-flex align-items-center">
<button class="tb" aria-label="Angle type"><svg viewBox="0 0 24 24"><path d="m2 2 11 20" stroke="#181880"/><path d="M12 2v20M4 6q4-3 8 0" stroke="#a01818" fill="none" stroke-width="1.500"/><path d="m22 2-3 19" stroke="#181880"/></svg></button><i class="dd"></i>
<div class="pair d-flex align-items-center"><button class="tb" aria-label="First object"><svg><use href="#tgt"/></svg></button><i class="dd"></i><button class="tb" aria-label="Second object"><svg><use href="#tgt"/></svg></button><i class="dd"></i></div>
<button class="tb ms-1" aria-label="Plane"><svg viewBox="0 0 24 24"><path d="M2 8v14h14M2 15q6 0 7 7" fill="none" stroke="#a01828" stroke-width="1.300"/><path d="m4 5 4-4 15 16-4 4z" fill="#fcec80" stroke="#333"/><path d="m8 9 2-2m0 5 3-2m0 5 2-2m0 5 3-2" stroke="#333"/></svg></button><i class="dd"></i>
<button class="tb" aria-label="Angle"><svg viewBox="0 0 24 24"><path d="M23 22H2L16 7" fill="none" stroke="#222" stroke-width="1.500"/><path d="M15 6q7 5 6 14" fill="none" stroke="#20308c" stroke-width="1.500"/><path d="m13 6 5-1-1 5zM19 16h4l-2 5z" fill="#20308c"/></svg></button><i class="dd"></i>
<button class="tb" aria-label="Expression"><svg viewBox="0 0 24 24"><path d="M1 1h18v18H1z" fill="#fff" stroke="#222"/><g font-family="DejaVu Sans Mono,monospace" font-size="8" fill="#182070"><text x="2" y="8">P1=</text><text x="2" y="18">P2</text></g><path d="M14 13h10v11H14z" fill="#8c8c30" stroke="#111"/><path d="M16 13h6v4h-6zM17 20h5v4h-5z" fill="#222"/></svg></button>
<button class="tb ms-1" aria-label="Annotation"><svg viewBox="0 0 24 24" fill="none" stroke="#20308c"><path d="m1 8 9-7M4 8l6 9" stroke="#222"/><path d="M2 3l4 3M3 7l2-5M12 23v-8M23 23v-8M12 19h11M16 14l3 3m0-3-3 3" stroke-width="1.300"/></svg></button>
<button class="tb ms-1" aria-label="Info window"><svg viewBox="0 0 24 24"><path d="M3 3h18v18H3z" fill="#fff" stroke="#1c2c9c" stroke-width="1.500"/><path d="M10 5h4v3h-4zM8 10h6v7h2v2H8v-2h2v-5H8z" fill="#1414c8"/></svg></button>
<button class="tb" aria-label="Cancel"><svg viewBox="0 0 24 24"><path d="m6 6 12 12M18 6 6 18" stroke="#501010" stroke-width="5"/><path d="m6 6 12 12M18 6 6 18" stroke="#d81818" stroke-width="3"/></svg></button>
</div>

<form class="finder position-absolute" onsubmit="return false">
<div class="d-flex align-items-center">
<input type="text" aria-label="搜索">
<button class="pill go d-flex align-items-center gap-1"><svg width="18" height="16" viewBox="0 0 18 16" fill="none" stroke="#2c98e4" stroke-width="2"><circle cx="11" cy="6" r="5" fill="#fff"/><path d="m7 10-5 4"/></svg>搜 索</button>
<button class="pill ms-2 px-1">网址</button><button class="pill px-1">词</button><button class="pill px-1" aria-label="Close search"><svg width="9" height="9" stroke="#1a5c94" stroke-width="2"><path d="m1 1 7 7M8 1 1 8"/></svg></button>
</div>
<button class="round position-absolute" aria-label="Resize"><svg width="18" height="18" fill="none" stroke="#2878b0"><path d="M4.500 4.500h6v6h-6zM7.500 7.500h6v6h-6zM7 7l4 4"/></svg></button>
</form>
</section>

<div class="right-edge flex-shrink-0"></div>
<aside class="res d-flex flex-column flex-shrink-0">
<div>
<button class="tab" aria-label="Assembly navigator"><svg viewBox="0 0 24 24"><path d="M1 1h5v5h5v5H1zM1 6h5v5" fill="#f4ec28" stroke="#555"/><path d="M4 12v11m0-5h6M12 10h11M16 20h8" stroke="#333" fill="none"/><path d="M9 15h6v6H9z" fill="#f4ec28" stroke="#555"/></svg></button>
<button class="tab" aria-label="Part navigator"><svg viewBox="0 0 24 24"><path d="M1 3q4-3 8 0v6q-4 3-8 0z" fill="#f0c8c8" stroke="#a02828"/><path d="M4 11v12m0-5h5M10 9h13M17 21h7" stroke="#333"/><circle cx="13" cy="18" r="4" fill="#fff" stroke="#a02828"/><circle cx="13" cy="18" r="1.500" fill="#a02828"/></svg></button></div>
<div>
<button class="tab" aria-label="Web"><svg viewBox="0 0 24 24"><path d="M3 1h12l6 5v17H3z" fill="#fcf4a8" stroke="#4460a0"/><path d="M15 1v5h6" fill="#fff" stroke="#4460a0"/><circle cx="12" cy="14" r="6" fill="#2c6cd0"/><path d="M8 11q5-5 7 0l-4 5z" fill="#58c050"/></svg></button>
<button class="tab" aria-label="Training"><svg viewBox="0 0 24 24"><path d="m0 8 13-5 11 5-13 6z" fill="#555868" stroke="#222"/><path d="M6 12v5q6 3 11 0v-6" fill="#444"/><path d="M6 9v13m2-10v9" stroke="#d02830" stroke-width="2"/></svg></button>
<button class="tab" aria-label="Help"><svg viewBox="0 0 24 24"><path d="M3 2h17v16h-2l2 5-7-5H3z" fill="#fcfcb0" stroke="#558"/><path d="M8 8q0-4 4-3.500t3 4q-3 1-3 4" fill="none" stroke="#1414a0" stroke-width="3"/><path d="M10.500 14h3v3h-3z" fill="#1414a0"/></svg></button></div>
<div>
<button class="tab" aria-label="History"><svg viewBox="0 0 24 24"><circle cx="12" cy="12" r="10" fill="#d8ecf4" stroke="#607080" stroke-width="2"/><circle cx="12" cy="12" r="7.500" fill="none" stroke="#445" stroke-dasharray="1 3"/><path d="M12 5v7h6" fill="none" stroke="#111" stroke-width="2"/></svg></button>
<button class="tab" aria-label="Palette"><svg viewBox="0 0 24 24"><path d="M9 2h14v19H9z" fill="#fff" stroke="#667"/><path d="m2 4 7-2v19l-7 2z" fill="#c8e4f4" stroke="#667"/><circle cx="13" cy="7" r="2" fill="#3c50c0"/><circle cx="13" cy="12" r="2" fill="#30a050"/><circle cx="13" cy="17" r="2" fill="#d03030"/><path d="M16 7h5M16 12h5M16 17h5" stroke="#444"/></svg></button>
<button class="tab" aria-label="Process"><svg viewBox="0 0 24 24"><path d="M4 4h5v14H4zM1 9h8M1 15h9" fill="#6468b8" stroke="#333874"/><path d="M10 6h13M2 19h8" stroke="#333"/><path d="m12 11 4-4 7 14-3 1-5-9-2 2z" fill="#7478d0" stroke="#333874" stroke-width=".7"/><circle cx="13" cy="4" r="3" fill="#fcf4a0"/></svg></button>
<button class="tab" aria-label="Roles"><svg viewBox="0 0 24 24"><circle cx="17" cy="6" r="4.500" fill="#f0a858" stroke="#90581c"/><path d="M11 18q0-7 6-7t7 7z" fill="#30983c"/><circle cx="7" cy="13" r="4.500" fill="#f0a890" stroke="#642838" stroke-width="1.500"/><path d="M1 24q0-6 6-6t6 6z" fill="#8c50c8"/></svg></button></div>
</aside>
</main>

<div class="speed position-absolute d-flex align-items-center ps-2 pe-1">
<svg width="9" height="10" stroke="#20a838" stroke-width="2" fill="none"><path d="M4.500 0v8M1 5l3.500 4L8 5"/></svg><span class="ms-auto">0K/S</span>
<svg class="ms-2" width="9" height="10" stroke="#f0b428" stroke-width="2" fill="none"><path d="M4.500 10V2M1 5l3.500-4L8 5"/></svg><span class="ms-auto me-2">0K/S</span><svg width="20" height="20"><use href="#ie"/></svg>
</div>

<footer class="taskbar d-flex align-items-center flex-shrink-0">
<button class="startbtn d-flex align-items-center"><svg width="22" height="22" viewBox="0 0 24 24"><path d="m4 4q4-2 8 1l-2 7q-4-3-8-1z" fill="#f05028"/><path d="M13 5q4 2 8 0l-2 7q-4 2-8 0z" fill="#80c838"/><path d="M2 13q4-2 8 1l-2 7q-4-3-8-1z" fill="#4c90f0"/><path d="M11 14q4 2 8 0l-2 7q-4 2-8 0z" fill="#f8c828"/></svg>开始</button>
<div class="quick d-flex align-items-center">
<svg width="18" height="18" viewBox="0 0 24 24"><circle cx="12" cy="12" r="10" fill="#70c040"/><path d="M6 12h12q-1-7-6-7t-6 7 11 5" fill="none" stroke="#fff" stroke-width="2.500"/></svg>
<svg width="18" height="18" viewBox="0 0 24 24"><path d="M4 5 18 2l3 16-14 5-5-5z" fill="#e8f4ff" stroke="#245ca8"/><path d="M7 12h9q-1-5-5-4t-3 6 7 3" fill="none" stroke="#2878d0" stroke-width="2"/></svg>
<svg width="18" height="18" viewBox="0 0 24 24"><path d="M2 2h20v20H2z" fill="#0a10c0"/><path d="M12 4v17M5 9q-1 10 7 10t7-10M9 7h6" fill="none" stroke="#f8d838" stroke-width="2"/></svg>
<span class="ms-auto mb-2">»</span></div>
<div class="d-flex flex-fill" style="gap:1px;min-width:0">
<button class="task d-flex align-items-center"><svg width="17" height="17"><use href="#ie"/></svg><span>跪求这个图片上的<span class="lat">...</span></span></button>
<button class="task d-flex align-items-center"><svg width="17" height="17" viewBox="0 0 20 20"><path d="M2 17V4h6l2 2h7v11z" fill="#f8c840" stroke="#c08818"/><path d="M4 17 5 9h13v8z" fill="#fce888"/></svg><span class="lat">F:\grip</span></button>
<button class="task d-flex align-items-center"><svg width="17" height="17" viewBox="0 0 17 17"><path d="M2 1h13v15H2z" fill="#fff" stroke="#a02020"/><path d="M4 3h2v4H4zM7.500 3h2v4h-2zM11.500 3v4M4.500 10v4M7 10h2v4H7zM12.500 10v4" stroke="#111" fill="none"/></svg><span class="lat">NX Open Grip</span></button>
<button class="task on d-flex align-items-center ms-1"><svg width="17" height="17"><use href="#nx"/></svg><span class="lat">NX 4 - Modeling ...</span></button>
</div>
<svg width="14" height="12" class="me-1" viewBox="0 0 14 12"><path d="M1 4h12v7H1z" fill="#fff" stroke="#222"/><path d="M2 6h10M2 8h10" stroke="#222" stroke-dasharray="1 1"/><path d="M7 4V1h4" stroke="#222" fill="none"/></svg>
<div class="tray d-flex align-items-center">
<svg width="16" height="16" viewBox="0 0 16 16"><circle cx="8" cy="8" r="7.500" fill="#1878e0" stroke="#9cd0ff"/><path d="M9.500 4 6 8l3.500 4" fill="none" stroke="#fff" stroke-width="2"/></svg>
<svg width="16" height="16" viewBox="0 0 16 16"><path d="M1 2h3v12H1zM6 2h9v5H6zM6 9h9v5H6z" fill="#dce8ff" stroke="#3c5cb0"/></svg>
<svg width="17" height="20" viewBox="0 0 17 20"><path d="M0 0h17v9H0z" fill="#d01818"/><path d="M0 9h17v10H0z" fill="#fff"/><text x="1" y="7" font-family="Noto Sans CJK SC,sans-serif" font-size="7" font-weight="bold" fill="#fff">中文</text><text x="3" y="18" font-family="Liberation Sans,sans-serif" font-size="9" font-weight="bold" fill="#101880">cn</text></svg>
<svg width="16" height="17" viewBox="0 0 16 17"><ellipse cx="8" cy="9" rx="6" ry="7" fill="#181818"/><ellipse cx="7" cy="12" rx="4" ry="4" fill="#fff"/><path d="M3 8q5 3 10 0v2q-5 3-10 0z" fill="#e02020"/><circle cx="6" cy="5" r="1.500" fill="#fff"/><circle cx="9" cy="5" r="1.500" fill="#fff"/><circle cx="12" cy="13" r="3.500" fill="#f8a028"/><path d="M10 13h4" stroke="#fff"/></svg>
<svg width="17" height="16" viewBox="0 0 17 16"><path d="M1 2h8v7H1zM3 11h5v3H3z" fill="#28386c" stroke="#a8c8f0"/><path d="M11 4q2 2 0 5M13 2q3 4 0 9" fill="none" stroke="#d8ecff"/></svg>
<span class="ps-1">17:59</span></div>
</footer>
<script src="https://cdn.jsdelivr.net/npm/bootstrap@5.3.0/dist/js/bootstrap.bundle.min.js"></script>
</body>
</html>
